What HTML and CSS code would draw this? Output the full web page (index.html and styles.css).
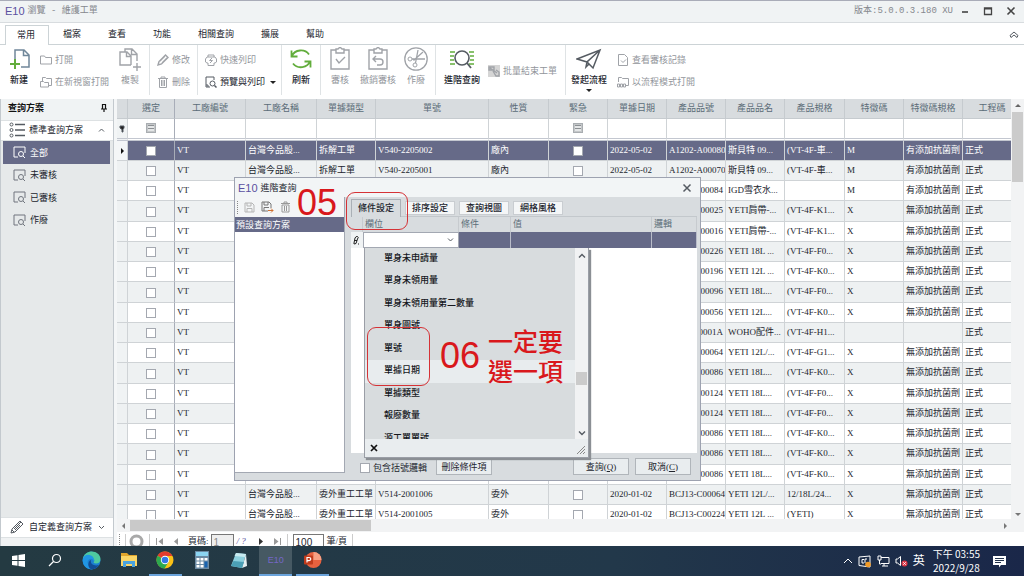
FILE: index.html
```html
<!DOCTYPE html>
<html lang="zh-Hant">
<head>
<meta charset="utf-8">
<title>瀏覽 - 維護工單</title>
<link rel="stylesheet" href="styles.css">
</head>
<body>
<div class="app">
  <header class="titlebar">
    <span class="logo">E10</span>
    <h1 class="title">瀏覽 - 維護工單</h1>
    <span class="title version">版本:5.0.0.3.180 XU</span>
    <button class="win-btn" aria-label="最小化"><svg width="10" height="10" viewBox="0 0 10 10"><path d="M2 6h6" stroke-width="1.6"/></svg></button>
    <button class="win-btn" aria-label="最大化"><svg width="10" height="10" viewBox="0 0 10 10"><path d="M1.5 2h7v6.500h-7zM1.500 2.800h7" stroke-width="1.3"/></svg></button>
    <button class="win-btn" aria-label="關閉"><svg width="10" height="10" viewBox="0 0 10 10"><path d="M1.500 1.500l7 7M8.500 1.500l-7 7" stroke-width="1.6"/></svg></button>
  </header>

  <nav class="menu">
    <button class="menu-tab active">常用</button><button class="menu-tab">檔案</button><button class="menu-tab">查看</button><button class="menu-tab">功能</button><button class="menu-tab">相關查詢</button><button class="menu-tab">擴展</button><button class="menu-tab">幫助</button>
    <button class="menu-fold" aria-label="收合"><svg width="10" height="8" viewBox="0 0 10 8"><path d="M1 4.500L5 1l4 3.500L8 6.500 5 4 2 6.500z"/></svg></button>
  </nav>

  <div class="ribbon">
    <div class="group">
      <button class="big"><svg width="24" height="24" viewBox="0 0 24 24"><path d="M8 12V3h9l5 5v12h-8M16.500 3v5.500H22" stroke="#70879a" stroke-width="1.500"/><path d="M8 12v10M3 17h10" stroke="#62ad3c" stroke-width="2"/></svg>新建</button>
      <div class="stack stack-open">
        <button class="small off"><svg width="12" height="12" viewBox="0 0 12 12"><path d="M.5 10V2h4l1 1.500h6V10z"/></svg>打開</button>
        <button class="small off"><svg width="12" height="12" viewBox="0 0 12 12"><path d="M2.500 5V1.500h3l1 1h5v7h-3M.5 11V5.500h3l1 1h4V11z"/></svg>在新視窗打開</button>
      </div>
      <button class="big off"><svg width="24" height="24" viewBox="0 0 24 24"><path d="M7 5V2h7l5 5v7M13.500 2v5.500H19M13 18H2V5h7l4 4v9M8.500 5v4.500H13M19 16v8M15 20h8" stroke-width="1.400"/></svg>複製</button>
    </div>
    <div class="group group-edit">
      <div class="stack">
        <button class="small off"><svg width="12" height="12" viewBox="0 0 12 12"><path d="M1 11l1-3.500L8.500 1 11 3.500 4.500 10zM3 7l5-5M5 9l5-5" stroke-width="1.400"/></svg>修改</button>
        <button class="small off"><svg width="12" height="12" viewBox="0 0 12 12"><path d="M1 2.500h10M4 2.500V1h4v1.500M2.500 3v8.500h7V3M4.500 4v6M6 4v6M7.500 4v6"/></svg>刪除</button>
      </div>
    </div>
    <div class="group group-print">
      <div class="stack">
        <button class="small off"><svg width="12" height="12" viewBox="0 0 12 12"><path d="M3 3V1h6v2M2 3h8l1.500 2v3L10 9H9v2.500H3V9H2L.5 8V5zM7 4L4.500 6.500h3L5 9"/></svg>快速列印</button>
        <button class="small"><svg width="12" height="12" viewBox="0 0 12 12"><path d="M5 11H1V1h8v3M3 11V9H1"/><circle cx="7.500" cy="7.500" r="2.500"/><path d="M9.500 9.500l2 2" stroke-width="1.500"/></svg>預覽與列印<i class="caret"></i></button>
      </div>
    </div>
    <div class="group">
      <button class="big"><svg width="24" height="24" viewBox="0 0 24 24"><path d="M3 9A9.500 8.500 0 0 1 20 7.500M21 14A9.500 8.500 0 0 1 4 16.500M2.500 3.500V9.500H8.500M21.500 20.500V14.500H15.500" stroke="#62ad3c" stroke-width="1.800"/></svg>刷新</button>
    </div>
    <div class="group">
      <button class="big off"><svg width="24" height="24" viewBox="0 0 24 24"><path d="M8 3H3v19h18V3h-5M8 2h2l2-2 2 2h2v4H8zM8 12l3 4 6-6" stroke-width="1.400"/></svg>審核</button>
      <button class="big off"><svg width="24" height="24" viewBox="0 0 24 24"><path d="M8 3H3v19h18V3h-5M8 2h2l2-2 2 2h2v4H8zM10 9l-3 3 3 3M7 12h7q3 0 3 3t-3 3h-3" stroke-width="1.400"/></svg>撤銷審核</button>
      <button class="big off"><svg width="24" height="24" viewBox="0 0 24 24"><circle cx="12" cy="12" r="11.200" stroke-width="1.300"/><circle cx="6" cy="12" r="2"/><circle cx="11" cy="18" r="2"/><path d="M8 12h13M11.500 16L14 3M9.500 13.500L19 5" stroke-width="1.300"/></svg>作廢</button>
    </div>
    <div class="group group-query">
      <button class="big"><svg width="26" height="24" viewBox="0 0 26 24"><path d="M1 5h5M1 9h4M1 13h4M1 17h5M20 5h5M21 9h4M21 13h4M20 17h5" stroke="#62ad3c" stroke-width="1.700"/><circle cx="13" cy="11" r="7" stroke-width="1.600"/><path d="M18 16l4 5" stroke-width="1.800"/></svg>進階查詢</button>
      <button class="small off"><svg width="12" height="12" viewBox="0 0 12 12"><path d="M0 0h12v12H0z" fill="#d5d5d5" stroke="none"/><path d="M1 2h5v3H1zM5 6l3 5h3V7L8 5M2 3l7 5" stroke-width="1.400"/></svg>批量結束工單</button>
    </div>
    <div class="group">
      <button class="big flow"><svg width="26" height="24" viewBox="0 0 26 24"><path d="M1 12L24 3l-7 18-6-6zM24 3L11 15l-1 5 3-3" stroke-width="1.500"/></svg>發起流程<i class="caret"></i></button>
      <div class="stack stack-flow">
        <button class="small off"><svg width="12" height="12" viewBox="0 0 12 12"><path d="M1.500.5h6l3 3v8h-9zM4 6.500L6 8.500l3-3"/></svg>查看審核記錄</button>
        <button class="small off"><svg width="12" height="12" viewBox="0 0 12 12"><path d="M1.500 6V1.500h3l1 1h6v7h-3M.5 8v3h2V8zM3.500 8v3h2V8zM6.500 8v3h2V8z"/></svg>以流程模式打開</button>
      </div>
    </div>
  </div>

  <main class="work">
    <aside class="side">
      <h2 class="side-head">查詢方案<svg width="8" height="10" viewBox="0 0 8 10"><path d="M2.500 6V1.500h3V6M1 6h6M4 6v3" stroke="#111" stroke-width="1.200"/></svg></h2>
      <button class="side-fold"><svg width="17" height="16" viewBox="0 0 17 16"><circle cx="2.500" cy="2.500" r="1.500"/><circle cx="2.500" cy="8" r="1.500"/><circle cx="2.500" cy="13.500" r="1.500"/><path d="M6 2.500h10M6 8h10M6 13.500h10" stroke-width="1.400"/></svg><span>標準查詢方案</span><svg width="7" height="6" viewBox="0 0 7 6"><path d="M1 4.500L3.500 2 6 4.500"/></svg></button>
      <ul class="side-list">
        <li><button class="side-item active"><svg width="13" height="13" viewBox="0 0 13 13"><path d="M5 11H1V1h11v6"/><circle cx="8" cy="8" r="2.500"/><path d="M10 10l2 2"/></svg>全部</button></li>
        <li><button class="side-item"><svg width="13" height="13" viewBox="0 0 13 13"><path d="M5 11H1V1h11v6"/><circle cx="8" cy="8" r="2.500"/><path d="M10 10l2 2"/></svg>未審核</button></li>
        <li><button class="side-item"><svg width="13" height="13" viewBox="0 0 13 13"><path d="M5 11H1V1h11v6"/><circle cx="8" cy="8" r="2.500"/><path d="M10 10l2 2"/></svg>已審核</button></li>
        <li><button class="side-item"><svg width="13" height="13" viewBox="0 0 13 13"><path d="M5 11H1V1h11v6"/><circle cx="8" cy="8" r="2.500"/><path d="M10 10l2 2"/></svg>作廢</button></li>
      </ul>
      <button class="side-fold"><svg width="17" height="16" viewBox="0 0 17 16"><path d="M2 14l1-4L11 2l3 3-8 8zM5 10l7-7M3 11l2 2M11 6l-5 5"/></svg><span>自定義查詢方案</span><svg width="7" height="6" viewBox="0 0 7 6"><path d="M1 2l2.500 2.500L6 2"/></svg></button>
      <div class="side-foot"></div>
    </aside>

    <section class="grid">
      <div class="grid-main">
        <div class="grid-view">
          <table class="data">
            <colgroup><col class="c11"><col class="c47"><col class="c71"><col class="c71"><col class="c59"><col class="c113"><col class="c60"><col class="c59"><col class="c59"><col class="c59"><col class="c59"><col class="c60"><col class="c59"><col class="c59"><col class="c59"></colgroup>
            <thead>
              <tr><th></th><th>選定</th><th>工廠編號</th><th>工廠名稱</th><th>單據類型</th><th>單號</th><th>性質</th><th>緊急</th><th>單據日期</th><th>產品品號</th><th>產品品名</th><th>產品規格</th><th>特徵碼</th><th>特徵碼規格</th><th>工程碼</th></tr>
              <tr class="filter"><td><svg width="8" height="8" viewBox="0 0 8 8"><path d="M2 1h4v2L5 4.500V7H4V4.500L2 3z" fill="#222" stroke-width="1"/></svg></td><td><input type="checkbox" class="check mixed" aria-label="篩選選定"></td><td></td><td></td><td></td><td></td><td></td><td><input type="checkbox" class="check mixed" aria-label="篩選緊急"></td><td></td><td></td><td></td><td></td><td></td><td></td><td></td></tr>
            </thead>
            <tbody id="rows"></tbody>
          </table>
        </div>
        <div class="vscroll"><i class="arrow up"></i><i class="thumb"></i><i class="arrow down"></i></div>
      </div>
      <div class="hscroll"><i class="arrow left"></i><i class="thumb"></i><i class="arrow right"></i></div>
      <div class="pager">
        <i class="dots"></i><i class="bar"></i>
        <svg width="15" height="15" viewBox="0 0 15 15"><circle cx="7.500" cy="7.500" r="5.500" stroke="#a9a9a9" stroke-width="3"/></svg><i class="bar"></i>
        <button class="page-btn first" aria-label="第一頁"><svg width="9" height="9" viewBox="0 0 9 9"><path d="M1.500 1v7" /><path d="M8 1v7L3.500 4.500z" fill="#999" stroke="none"/></svg></button>
        <button class="page-btn" aria-label="上一頁"><svg width="9" height="9" viewBox="0 0 9 9"><path d="M6 1v7L2 4.500z" fill="#999" stroke="none"/></svg></button>
        <label for="page">頁碼:</label><input id="page" class="page-in" value="1" disabled>
        <span class="total">/ ?</span>
        <button class="page-btn" aria-label="下一頁"><svg width="9" height="9" viewBox="0 0 9 9"><path d="M3 1v7l4-3.500z" fill="#333" stroke="none"/></svg></button>
        <button class="page-btn last" aria-label="最後一頁"><svg width="9" height="9" viewBox="0 0 9 9"><path d="M7.500 1v7"/><path d="M1 1v7l4.500-3.500z" fill="#999" stroke="none"/></svg></button><i class="bar"></i>
        <input id="size" class="page-in size" value="100"><label for="size">筆/頁</label><i class="bar"></i>
      </div>
    </section>
  </main>

  <footer class="taskbar">
    <nav class="tasks">
      <button class="task" aria-label="開始"><svg width="13" height="13" viewBox="0 0 13 13"><path d="M0 2l5.500-.8V6H0zM6.500 1L13 0v6H6.500zM0 7h5.500v4.800L0 11zM6.500 7H13v6l-6.500-1z" fill="#fff"/></svg></button>
      <button class="task" aria-label="搜尋"><svg width="14" height="14" viewBox="0 0 14 14"><circle cx="8.500" cy="5.500" r="4" fill="none" stroke="#fff" stroke-width="1.200"/><path d="M5.500 8.500L1 13" stroke="#fff" stroke-width="1.300"/></svg></button>
      <button class="task" aria-label="Edge"><svg width="19" height="19" viewBox="0 0 19 19"><circle cx="9.500" cy="9.500" r="9" fill="#1b7fd0"/><path d="M.8 8C2 2.500 6 .5 9.500.5c5 0 9 3.500 9 7.500 0 3-2 4.500-4.500 4.500-2 0-3-.8-2-2 .8-1 .3-3.500-3-3.500C5 7 2 8 .8 8z" fill="#4ec9a0"/><path d="M.8 8C2 4 6 3 9 4.500c2.500 1 3.500 4 3 6C11 8 9 7 7 8.500 4 11 6 16 11 18c-6 1.500-11-4-10.200-10z" fill="#2196e3"/><path d="M9 9c-1 4 3 6.500 8 5-2 3-5 4.500-8 4.300C5 16 6 10 9 9z" fill="#124c94"/></svg></button>
      <button class="task" aria-label="檔案總管"><svg width="18" height="16" viewBox="0 0 18 16"><path d="M1 1h6l2 2h8v11H1z" fill="#e0a52c"/><path d="M1 4h16v10H1z" fill="#fbd667"/><path d="M3 15V9h12v6h-3v-3H6v3z" fill="#4aa3df"/></svg></button>
      <button class="task open" aria-label="Chrome"><svg width="18" height="18" viewBox="0 0 18 18"><circle cx="9" cy="9" r="8.500" fill="#fbc116"/><path d="M9 9L1.600 4.700A8.500 8.500 0 0 1 16.400 5H9z" fill="#e33b2e"/><path d="M9 9l-7.400-4.300A8.500 8.500 0 0 0 8.500 17.500L12.500 11z" fill="#2da94f"/><circle cx="9" cy="9" r="4.200" fill="#fff"/><circle cx="9" cy="9" r="3.300" fill="#3478e5"/></svg></button>
      <button class="task" aria-label="小算盤"><svg width="14" height="18" viewBox="0 0 14 18"><path d="M0 0h14v18H0z" fill="#6b8aa3"/><path d="M1 1h12v4H1z" fill="#8bd5f2"/><path d="M1.500 7h3v2.500h-3zM5.500 7h3v2.500h-3zM9.500 7h3v2.500h-3zM1.500 10.500h3V13h-3zM5.500 10.500h3V13h-3zM1.500 14h3v2.500h-3zM5.500 14h3v2.500h-3z" fill="#fff"/><path d="M9.500 10.500h3v6h-3z" fill="#1763b0"/></svg></button>
      <button class="task" aria-label="記事本"><svg width="18" height="17" viewBox="0 0 18 17"><path d="M6 1l10 1-4 14L1 14z" fill="#8ed0de"/><path d="M16 2l1 12-5 2z" fill="#e6eef0"/><path d="M6 1l10 1-1 3L4.500 4z" fill="#c8eaf0"/><path d="M3.500 9L14 10l-2 6L1 14z" fill="#4c9fb5"/></svg></button>
      <button class="task open current">E10</button>
      <button class="task open" aria-label="PowerPoint"><svg width="19" height="18" viewBox="0 0 19 18"><circle cx="10.500" cy="9" r="8" fill="#e8623f"/><path d="M10.500 1a8 8 0 0 1 8 8h-8z" fill="#f7a184"/><rect x="1" y="4.500" width="9" height="9" rx="1" fill="#c03b1c"/><path d="M4 11.500v-5h2q1.800 0 1.800 1.500T6 9.700H4" fill="none" stroke="#fff" stroke-width="1.200"/></svg></button>
    </nav>
    <div class="tray">
      <svg width="10" height="8" viewBox="0 0 10 8"><path d="M1 6l4-4 4 4"/></svg>
      <svg width="14" height="13" viewBox="0 0 14 13"><path d="M1 2l11-1v11L1 10.500zM4 4.500h2M4 8h2M4 4.500V8M9 4H7v4"/><circle cx="10" cy="9.500" r="2.800" fill="#f09a28" stroke="none"/></svg>
      <svg width="13" height="12" viewBox="0 0 13 12"><path d="M4 2.500h8v6H4M7 8.500V11M5 11h6M1 1h3v4H1zM2.500 5v4H4"/></svg>
      <svg width="13" height="12" viewBox="0 0 13 12"><path d="M1 4h1.500L5.500 1.500v9L2.500 8H1z"/><circle cx="9.500" cy="8.500" r="3" fill="#dc3545" stroke="none"/><path d="M8.300 7.300l2.400 2.400M10.700 7.300L8.300 9.700"/></svg>
      <span class="ime">英</span>
      <time class="clock">下午 03:55<br>2022/9/28</time>
      <svg width="13" height="13" viewBox="0 0 13 13"><path d="M0 1h13v9H8l-2 2.500V10H0z" fill="#fff" stroke="none"/><path d="M2 3.500h9M2 5.500h9M2 7.500h6" stroke="#24344d"/></svg>
    </div>
  </footer>

  <section class="dialog" role="dialog" aria-labelledby="dlg">
    <header class="dlg-head"><span class="logo">E10</span><h2 id="dlg">進階查詢</h2><button class="win-btn" aria-label="關閉"><svg width="10" height="10" viewBox="0 0 10 10"><path d="M1.500 1.500l7 7M8.500 1.500l-7 7" stroke-width="1.500"/></svg></button></header>
    <div class="dlg-body">
      <div class="plans">
        <div class="plan-tools">
          <i class="dots"></i>
          <button aria-label="儲存"><svg width="11" height="11" viewBox="0 0 11 11"><path d="M1 1h7l2 2v7H1zM3 1v3h4V1M3 10V6.500h5V10" stroke="#b5b5b5"/></svg></button>
          <button aria-label="另存"><svg width="13" height="12" viewBox="0 0 13 12"><path d="M1 1h7l2 2v4M1 1v9h6M3 1v3h4V1M3 10V6.500h5" stroke="#777"/><path d="M7 9.500h5M10 7.500l2 2-2 2" stroke="#d07030"/></svg></button>
          <button aria-label="刪除"><svg width="11" height="12" viewBox="0 0 11 12"><path d="M1 2.500h9M4 2.500V1h3v1.500M2 4v7h7V4zM4.500 5v5M6.500 5v5" stroke="#999"/></svg></button>
        </div>
        <button class="plan active">預設查詢方案</button>
      </div>
      <div class="cond">
        <div class="dlg-tabs"><button class="dlg-tab active">條件設定</button><button class="dlg-tab">排序設定</button><button class="dlg-tab">查詢視圖</button><button class="dlg-tab">網格風格</button></div>
        <div class="cond-box">
          <div class="cond-row cond-head"><span></span><span>欄位</span><span>條件</span><span>值</span><span>邏輯</span></div>
          <div class="cond-row cond-edit">
            <span class="pen"><svg width="8" height="10" viewBox="0 0 8 10"><path d="M2 8l1-5q1-2 2.500-1.500T5.500 4L4 8.500 2 9zM3 5.500h2M6 9h1" stroke="#222"/></svg></span>
            <span class="combo"><input role="combobox" aria-label="欄位" aria-expanded="true"><button aria-label="展開"><svg width="7" height="6" viewBox="0 0 7 6"><path d="M1 1.500L3.500 4 6 1.500"/></svg></button></span>
            <span class="cell"></span><span class="cell"></span><span class="cell"></span>
            <div class="drop">
              <div class="drop-main">
                <ul class="options" role="listbox" aria-label="欄位">
                  <li role="option">單身未申請量</li><li role="option">單身未領用量</li><li role="option">單身未領用量第二數量</li><li role="option">單身圖號</li><li role="option">單號</li><li role="option" class="hover">單據日期</li><li role="option">單據類型</li><li role="option">報廢數量</li><li role="option">源工單單號</li>
                </ul>
                <div class="drop-scroll"><svg width="8" height="6" viewBox="0 0 8 6"><path d="M1 4.500L4 1.500l3 3" stroke-width="1.400"/></svg><i class="thumb"></i><svg width="8" height="6" viewBox="0 0 8 6"><path d="M1 1.500l3 3 3-3" stroke-width="1.400"/></svg></div>
              </div>
              <div class="drop-foot"><button aria-label="清除"><svg width="8" height="8" viewBox="0 0 8 8"><path d="M1 1l6 6M7 1L1 7" stroke="#111" stroke-width="1.700"/></svg></button><svg width="10" height="10" viewBox="0 0 10 10"><path d="M1 9l8-8M4 9l5-5M7 9l2-2" stroke="#888"/></svg></div>
            </div>
          </div>
        </div>
        <div class="dlg-actions">
          <label class="paren"><input type="checkbox" class="check">包含括號邏輯</label>
          <button class="btn">刪除條件項</button>
          <button class="btn go">查詢(<u>Q</u>)</button>
          <button class="btn">取消(<u>C</u>)</button>
        </div>
      </div>
    </div>
  </section>

  <div class="ring ring-tab"></div>
  <div class="ring ring-option"></div>
  <strong class="note note-five">05</strong>
  <strong class="note note-six">06</strong>
  <strong class="note note-text">一定要<br>選一項</strong>
</div>
<script src="script.js"></script>
</body>
</html>
```
FILE: styles.css
```css
* { box-sizing: border-box; }
body {
  margin: 0;
  height: 100vh;
  overflow: hidden;
  font: 9px/12px "Liberation Serif", "Noto Sans CJK TC", sans-serif;
  color: #22252e;
  background: #fff;
}
button, input { font: inherit; color: inherit; }
button {
  border: 0;
  padding: 0;
  background: none;
  display: flex;
  align-items: center;
  justify-content: center;
  white-space: nowrap;
}
h1, h2, ul { margin: 0; padding: 0; font-size: 9px; font-weight: 400; list-style: none; }
svg { fill: none; stroke: #555b62; flex: none; display: block; }

.app { height: 100vh; display: flex; flex-direction: column; position: relative; }

.titlebar {
  height: 23px;
  flex: none;
  display: flex;
  align-items: center;
  padding: 0 2px 2px 5px;
  background: #f0f3f4;
  border-top: 1px solid #a9acb8;
  border-bottom: 1px solid #d8dcdf;
}
.logo { font: 11px/16px "Liberation Sans Narrow", "Liberation Sans", sans-serif; color: #5a50a0; margin-right: 3px; }
.title { font-family: "Liberation Mono", "Noto Sans CJK TC", monospace; color: #85888e; }
.version { margin-left: auto; }
.win-btn { width: 23px; height: 16px; }
.titlebar .win-btn svg { stroke: #444; }

.menu { height: 22px; flex: none; display: flex; align-items: stretch; padding: 2px 5px 0; border-bottom: 1px solid #ccd3d6; background: #fff; }
.menu-tab { padding: 0 13px 2px 14px; }
.menu-tab.active { padding: 0 13px 2px 11px; border: 1px solid #ccd3d6; border-bottom: 0; background: #fff; margin-bottom: -1px; }
.menu-fold { margin-left: auto; }

.ribbon { height: 54px; flex: none; display: flex; background: #fff; }
.group { display: flex; align-items: flex-start; border-right: 1px solid #dfe3e5; margin-bottom: 4px; }
.group:last-child { border: 0; }
.big { flex-direction: column; width: 38px; gap: 3px; padding-top: 2px; font-weight: 500; }
.off { color: #92959b; font-weight: 400; }
.off svg { stroke: #a0a3a8; }
.stack { display: flex; flex-direction: column; gap: 10px; padding: 9px 0 0 7px; }
.stack-open { padding-left: 2px; padding-right: 2px; }
.stack-flow { padding-left: 5px; }
.small { gap: 3px; justify-content: flex-start; }
.group-edit { width: 48px; }
.group-print { width: 84px; }
.caret { border: 3px solid transparent; border-top-color: #222; border-bottom: 0; margin-left: 2px; }
.group-query { width: 130px; align-items: flex-start; }
.group-query .big { width: 52px; }
.group-query .small { margin-top: 20px; }
.flow { width: 46px; }
.flow .caret { margin: 0; }

.work { flex: 1; min-height: 0; display: flex; background: #f4f6f7; }
.side { width: 114px; flex: none; display: flex; flex-direction: column; background: #e6e9ea; border: 1px solid #c3c9ce; border-width: 0 1px; margin-right: 3px; }
.side-head { height: 21px; flex: none; display: flex; align-items: center; justify-content: space-between; padding: 0 5px 3px 7px; font-weight: 700; color: #111; background: #f0f3f4; }
.side-fold { height: 21px; flex: none; background: #fff; border: 1px solid #dde1e3; border-width: 1px 0; padding: 0 8px 2px; gap: 3px; justify-content: flex-start; }
.side-fold svg:last-child { margin-left: auto; }
.side-list { flex: 1; }
.side-item { width: 107px; height: 23px; margin-left: 2px; padding-left: 10px; gap: 4px; justify-content: flex-start; }
.side-list li:nth-child(even) .side-item { height: 22px; }
.side-item svg { stroke: #70757e; }
.side-item.active { background: #666a88; color: #fff; }
.side-item.active svg { stroke: #fff; }
.side-foot { height: 8px; flex: none; background: #f0f2f3; }

.grid { flex: 1; min-width: 0; display: flex; flex-direction: column; }
.grid-main { flex: 1; min-height: 0; display: flex; }
.grid-view { flex: 1; min-width: 0; overflow: hidden; background: #fff; }
.data { table-layout: fixed; border-collapse: separate; border-spacing: 0; width: 905px; }
.c11 { width: 11px; } .c47 { width: 47px; } .c59 { width: 59px; } .c60 { width: 60px; } .c71 { width: 71px; } .c113 { width: 113px; }
.data th, .data td { height: 20px; padding: 0 2px 2px; border: 1px solid #cfd3d6; border-width: 0 1px 1px 0; white-space: nowrap; overflow: hidden; }
.data th { background: #d8dcdf; color: #5b6c78; font-weight: 400; border-color: #c6cbcf; }
.data tbody tr:nth-child(4n) td { height: 21px; }
.data tbody td:nth-child(2), .data tbody td:nth-child(8) { padding-bottom: 0; }
.data td:nth-child(2), .data td:nth-child(8) { text-align: center; }
.data td:nth-child(2), .data th:nth-child(2) { border-right-color: #a8adb8; }
.data td:nth-child(10) { text-align: right; }
.data .filter td { height: 22px; border-bottom: 3px double #c3c7d0; }
.data td:first-child { padding: 0 1px; background: #f0f3f4; }
.data tbody tr:nth-child(even) td { background: #eef1f2; }
.data tbody tr.selected td { background: #666a88; color: #fff; }
.data tbody tr.selected td:first-child { background: #f4f6f7; }
.marker { display: block; width: 0; margin: 0 auto; border: 3px solid transparent; border-left-color: #111; border-right: 0; }
.check { appearance: none; width: 10px; height: 10px; margin: 0; border: 1px solid #a4a8b0; background: #fff; vertical-align: middle; flex: none; }
.mixed { border-color: #a9adb1; background: linear-gradient(#8b8f93 1px, #e4e6e7 1px, #e4e6e7 3px, #8b8f93 3px, #8b8f93 4px, #e4e6e7 4px) 1px 1px / 6px 6px no-repeat #c4c7c9; }

.vscroll { width: 13px; background: #f2f3f4; display: flex; flex-direction: column; align-items: center; padding: 5px 0 3px; }
.vscroll .thumb { width: 11px; height: 70px; margin-top: 5px; background: #cbcbcb; }
.arrow { border: 3px solid transparent; }
.up { border-bottom-color: #666; border-top: 0; }
.down { border-top-color: #777; border-bottom: 0; margin-top: auto; }
.left { border-right-color: #777; border-left: 0; }
.right { border-left-color: #777; border-right: 0; margin-left: auto; }
.hscroll { height: 13px; flex: none; display: flex; align-items: center; background: #f2f3f4; padding: 0 17px 0 5px; }
.hscroll .thumb { width: 241px; height: 11px; margin-left: 5px; background: #c9c9c9; }
.pager { height: 14px; flex: none; display: flex; align-items: flex-start; padding: 2px 0 0 2px; background: #fff; overflow: hidden; }
.dots { width: 1px; height: 13px; border-left: 1px dotted #888; }
.bar { width: 1px; height: 13px; background: #ccc; margin: 0 3px 0 5px; }
.pager svg { stroke: #999; }
.pager label { line-height: 14px; }
.page-btn { width: 9px; height: 15px; margin-left: 8px; }
.page-btn + label { margin-left: 7px; }
.page-btn.first { margin-left: 2px; }
.page-in { width: 23px; height: 16px; margin: 0 3px 0 2px; padding: 0 2px; border: 1px solid #777; border-radius: 0; font: 10px/13px "Liberation Sans", sans-serif; background: #fff; }
.page-in:disabled { background: #eee; color: #888; }
.page-in.size { width: 31px; }
.total { color: #5950a0; font-style: italic; line-height: 15px; width: 12px; }
.total + .page-btn { margin-left: 7px; }

.taskbar { height: 30px; flex: none; display: flex; justify-content: space-between; color: #fff; background: linear-gradient(90deg, #243a42, #22384a 60%, #1a2749); }
.tasks { width: 331px; display: grid; grid-template-columns: repeat(9, 1fr); }
.task { border-bottom: 2px solid transparent; margin: 0 2px; }
.task svg { stroke: none; }
.open { border-color: #6ba4dc; }
.current { background: #465963; color: #7567c6; font: 9px/12px "Liberation Sans", sans-serif; }
.tray { display: flex; align-items: center; gap: 5px; padding-right: 18px; }
.tray svg { stroke: #fff; }
.ime { font-size: 12px; line-height: 16px; margin-right: 3px; }
.clock { font: 10px/14px "Noto Sans CJK TC", sans-serif; text-align: center; margin-right: 8px; }

.dialog { position: absolute; left: 234px; top: 177px; width: 467px; height: 304px; display: flex; flex-direction: column; border: 1px solid #9da2b0; background: #d8dcdf; }
.dlg-head { height: 19px; flex: none; display: flex; align-items: center; padding: 0 2px 0 3px; background: #f2f5f6; }
.dlg-head .win-btn { margin-left: auto; }
.dlg-body { flex: 1; min-height: 0; display: flex; }
.plans { width: 110px; margin-bottom: 7px; background: #fff; border: 1px solid #a3a8b2; border-width: 0 1px 1px 0; }
.plan-tools { height: 20px; display: flex; align-items: center; gap: 6px; padding-left: 2px; background: #f3f5f6; }
.plan { width: 100%; height: 15px; justify-content: flex-start; padding-left: 1px; background: #666a88; color: #fff; }
.cond { flex: 1; min-width: 0; display: flex; flex-direction: column; padding: 0 3px 5px 6px; }
.dlg-tabs { height: 20px; flex: none; display: flex; align-items: center; gap: 4px; padding-top: 2px; border-bottom: 1px solid #c3c8cc; }
.dlg-tab { height: 14px; width: 50px; background: #f4f6f7; border: 1px solid #c9cdd1; font-weight: 500; }
.dlg-tab.active { height: 18px; background: #d8dcdf; border-bottom: 0; border-color: #aab0b6; }
.cond-box { flex: 1; background: #fff; }
.cond-row { display: grid; grid-template-columns: 12px 96px 52px 141px 1fr; height: 15px; }
.cond-head { background: #d8dcdf; color: #5b6c78; line-height: 14px; }
.cond-head span { padding-left: 2px; border-right: 1px solid #c7cbcf; }
.cond-edit { position: relative; height: 16px; }
.cell { background: #666a88; border-right: 1px solid #b9bcc9; }
.pen { background: #f0f3f4; padding: 3px 1px; }
.combo { display: flex; background: #fff; border: 1px solid #a3a8b2; padding-right: 4px; }
.combo input { flex: 1; min-width: 0; border: 0; padding: 0 2px; background: none; }
.drop { position: absolute; left: 13px; top: 16px; width: 225px; height: 210px; display: flex; flex-direction: column; border: 1px solid #9a9ea6; border-top: 0; background: #e9edef; box-shadow: 2px 2px 1px #8b8f94; }
.drop-main { flex: 1; min-height: 0; display: flex; }
.options { flex: 1; overflow: hidden; background: #d8dcde; color: #15171c; font-weight: 500; }
.options li { height: 22px; line-height: 20px; padding-left: 19px; }
.options li:nth-child(even) { height: 23px; }
.options .hover { background: #e8ecee; }
.drop-scroll { width: 13px; display: flex; flex-direction: column; align-items: center; padding: 5px 0 3px; background: #f1f2f3; }
.drop-scroll .thumb { width: 11px; height: 13px; background: #cbcbcb; margin: 113px 0 auto; }
.drop-foot { height: 18px; flex: none; display: flex; align-items: center; justify-content: space-between; padding: 0 2px 0 5px; }
.drop-foot > svg { align-self: flex-end; margin-bottom: 2px; }
.dlg-actions { height: 22px; flex: none; display: flex; align-items: flex-end; gap: 6px; padding-right: 6px; }
.paren { display: flex; align-items: center; gap: 3px; padding-left: 9px; height: 14px; margin-right: 3px; }
.btn { width: 56px; height: 17px; border: 1px solid #b0b5ba; background: #e9edef; }
.go { margin-left: auto; }

.ring { position: absolute; border: 1px solid #d53236; border-radius: 9px; }
.ring-tab { left: 346px; top: 192px; width: 62px; height: 38px; }
.ring-option { left: 367px; top: 327px; width: 63px; height: 59px; }
.note { position: absolute; color: #d9181c; font: 36px/36px "Liberation Sans", sans-serif; }
.note-five { left: 297px; top: 185px; }
.note-six { left: 440px; top: 338px; }
.note-text { left: 488px; top: 325px; font: 500 25px/30px "Noto Sans CJK TC", sans-serif; }
```
FILE: script.js
```js
const none = '無添加抗菌劑';
const some = '有添加抗菌劑';
// factory name, type, order no., nature, date, item no., item name, spec, feature, feature spec
const orders = [
  ['台灣今品股...', '拆解工單', 'V540-2205002', '廠內', '2022-05-02', 'A1202-A00080', '斯貝特 09...', '(VT-4F-車...', 'M', some],
  ['台灣今品股...', '拆解工單', 'V540-2205001', '廠內', '2022-05-02', 'A1202-A00070', '斯貝特 09...', '(VT-4F-車...', 'M', some],
  ['', '', '', '', '', '00084', 'IGD雪衣水...', '', 'M', some],
  ['', '', '', '', '', '00025', 'YETI肩帶-...', '(VT-4F-K1...', 'X', none],
  ['', '', '', '', '', '00016', 'YETI肩帶-...', '(VT-4F-K1...', 'X', none],
  ['', '', '', '', '', '00226', 'YETI 18L ...', '(VT-4F-F0...', 'X', none],
  ['', '', '', '', '', '00196', 'YETI 12L ...', '(VT-4F-K0...', 'X', none],
  ['', '', '', '', '', '00096', 'YETI 18L...', '(VT-4F-F0...', 'X', none],
  ['', '', '', '', '', '00056', 'YETI 12L...', '(VT-4F-K0...', 'X', none],
  ['', '', '', '', '', '0001A', 'WOHO配件...', '(VT-4F-H1...', '', ''],
  ['', '', '', '', '', '00064', 'YETI 12L/...', '(VT-4F-G1...', 'X', none],
  ['', '', '', '', '', '00086', 'YETI 18L...', '(VT-4F-K0...', 'X', none],
  ['', '', '', '', '', '00124', 'YETI 18L...', '(VT-4F-F0...', 'X', none],
  ['', '', '', '', '', '00124', 'YETI 18L...', '(VT-4F-F0...', 'X', none],
  ['', '', '', '', '', '00086', 'YETI 18L...', '(VT-4F-K0...', 'X', none],
  ['', '', '', '', '', '00086', 'YETI 18L...', '(VT-4F-K0...', 'X', none],
  ['', '', '', '', '', '00086', 'YETI 18L...', '(VT-4F-K0...', 'X', none],
  ['台灣今品股...', '委外重工工單', 'V514-2001006', '委外', '2020-01-02', 'BCJ13-C00064', 'YETI 12L/...', '12/18L/24...', 'X', none],
  ['台灣今品股...', '委外重工工單', 'V514-2001005', '委外', '2020-01-02', 'BCJ13-C00224', 'YETI 12L ...', '(YETI)', 'X', none]
];
const check = (label) => `<input type="checkbox" class="check" aria-label="${label}">`;
document.getElementById('rows').innerHTML = orders.map((o, i) => {
  const cells = [i ? '' : '<i class="marker"></i>', check('選定'), 'VT', ...o.slice(0, 4), check('緊急'), ...o.slice(4), '正式'];
  return `<tr${i ? '' : ' class="selected"'}>${cells.map((c) => `<td>${c}</td>`).join('')}</tr>`;
}).join('');
```
